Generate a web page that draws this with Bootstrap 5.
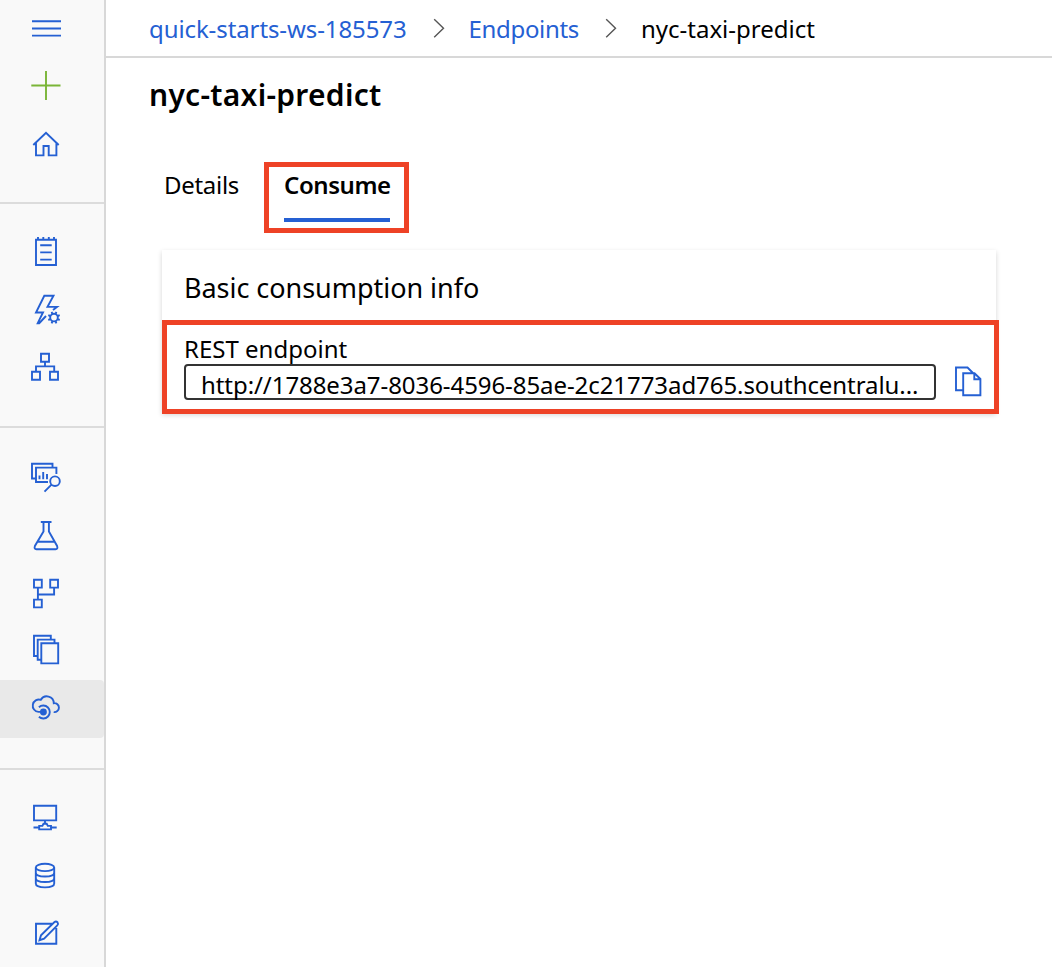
<!DOCTYPE html>
<html lang="en">
<head>
<meta charset="utf-8">
<meta name="viewport" content="width=device-width, initial-scale=1">
<title>nyc-taxi-predict</title>
<link href="https://cdn.jsdelivr.net/npm/bootstrap@5.3.0/dist/css/bootstrap.min.css" rel="stylesheet">
<style>
  body { font-family: "Noto Sans", "Open Sans", sans-serif; font-size: 24px; color: #000; background: #fff; --blue: #2560d3; overflow: hidden; }
  a { color: var(--blue); }
  .side { width: 106px; background: #f9f9f9; border-right: 2px solid #d8d8d8; }
  .side-group { padding: 20px 0 28px; border-bottom: 2px solid #dcdcdc; }
  .side-group.first { padding-top: 0; }
  .side-group.assets { padding-bottom: 30px; }
  .side-group.manage { border-bottom: 0; padding-bottom: 0; }
  .side-item { height: 58px; padding-left: 28px; }
  .side-item.current { background: #e9e9e9; border-radius: 0 4px 4px 0; }
  .glyph { fill: none; stroke: var(--blue); stroke-width: 1.9; flex: none; }
  .glyph .plus { stroke: #7ab537; }
  .topbar { height: 58px; border-bottom: 2px solid #d8d8d8; padding-left: 43px; }
  .topbar .t { padding-top: 2px; }
  .crumb-ws { letter-spacing: -.1px; }
  .crumb-section { letter-spacing: -.33px; margin-left: 24px; }
  .crumb-page { margin-left: 24px; }
  .chev { fill: none; stroke: #555; stroke-width: 1.4; flex: none; margin-left: 26px; }
  .title { font-size: 30px; font-weight: 600; line-height: 40px; letter-spacing: .27px; margin: 17px 0 0 43px; }
  .tabs { margin: 47px 0 0 58px; line-height: 34px; }
  .tab-plain { padding-top: 6px; width: 75px; letter-spacing: -.3px; }
  .tab-active { width: 145px; height: 71px; border: 5px solid #ee4226; margin-left: 25px; padding: 1px 14px 0 15px; }
  .tab-active span { height: 54px; border-bottom: 4px solid var(--blue); font-weight: 600; letter-spacing: -.43px; }
  .panel { width: 834px; height: 163px; margin: 17px 0 0 56px; box-shadow: 0 2px 5px rgba(0,0,0,.17); }
  .panel-title { height: 70px; padding: 18px 22px 0; font-size: 27px; line-height: 40px; letter-spacing: -.04px; }
  .endpoint { width: 836.5px; height: 94px; border: 5px solid #ee4226; padding: 7px 10px 0 17px; }
  .endpoint label { line-height: 34px; height: 32px; }
  .url { width: 752px; height: 36px; border: 2px solid #333; border-radius: 4px; padding: 0 14px 0 15px; line-height: 38px; letter-spacing: -.07px; }
  .copy { margin-left: 18px; }
  .t { white-space: nowrap; display: block; }
</style>
</head>
<body>
<div class="d-flex vh-100">
  <nav class="side flex-shrink-0">
    <div class="side-group first">
      <div class="side-item d-flex align-items-center"><svg class="glyph" width="36" height="36" viewBox="28 11 36 36"><path d="M32 21.3H61M32 28.5H61M32 35.6H61"/></svg></div>
      <div class="side-item d-flex align-items-center"><svg class="glyph" width="36" height="36" viewBox="28 69 36 36"><path class="plus" d="M31.3 85.5H60.5M46 71V100"/></svg></div>
      <div class="side-item d-flex align-items-center"><svg class="glyph" width="36" height="36" viewBox="28 127 36 36"><path d="M33.3 145L46 132.7 58.7 145M36 143V155.4H43.5V146H48.7V155.4H56.4V143"/></svg></div>
    </div>
    <div class="side-group">
      <div class="side-item d-flex align-items-center"><svg class="glyph" width="36" height="36" viewBox="28 235 36 36"><path d="M36 239.7H56V265H36ZM38 237V240M43.3 237V240M48.8 237V240M54 237V240M40.2 245.3H51.7M40.2 252.4H51.7M40.2 259.6H51.7"/></svg></div>
      <div class="side-item d-flex align-items-center"><svg class="glyph" width="36" height="36" viewBox="28 293 36 36"><path d="M53 310L57 306.9H47.5L53.5 295.8H44.3L36 312.5H43L37.7 323.2H39.2L46 316"/><circle cx="54" cy="317.6" r="3.8"/><path d="M57.8 319.2L59.7 320M55.6 321.4L56.4 323.3M52.4 321.4L51.6 323.3M50.2 319.2L48.3 320M50.2 316L48.3 315.2M52.4 313.8L51.6 311.9M55.6 313.8L56.4 311.9M57.8 316L59.7 315.2"/></svg></div>
      <div class="side-item d-flex align-items-center"><svg class="glyph" width="36" height="36" viewBox="28 351 36 36"><path d="M41 353.8H49V361.8H41ZM32 371.7H40V379.7H32ZM50 371.7H58V379.7H50ZM45 362V366.4M36 371.5V366.4H54.2V371.5"/></svg></div>
    </div>
    <div class="side-group assets">
      <div class="side-item d-flex align-items-center"><svg class="glyph" width="36" height="36" viewBox="28 459 36 36"><path d="M52.5 467V463.8H32V478.5H35.5M48 482H36V467.6H56.4V474M39.5 475.5V479.3M43.2 472V479.3M47 474V479.3M51.5 484.6L44.5 491.6"/><circle cx="55" cy="481.2" r="4.8"/></svg></div>
      <div class="side-item d-flex align-items-center"><svg class="glyph" width="36" height="36" viewBox="28 517 36 36"><path d="M40.8 522H51.5M43.5 522V531.5L34.9 546Q33.8 549 36.5 549.2H55.5Q58.2 549 57.1 546L48.9 531.5V522M37.5 541.7H54.5"/></svg></div>
      <div class="side-item d-flex align-items-center"><svg class="glyph" width="36" height="36" viewBox="28 575 36 36"><path d="M34 579.8H41.8V587.6H34ZM50.2 579.8H58V587.6H50.2ZM34 599.6H41.8V607.4H34ZM37.9 587.6V599.6M37.9 594.5H54.1V587.6"/></svg></div>
      <div class="side-item d-flex align-items-center"><svg class="glyph" width="36" height="36" viewBox="28 633 36 36"><path d="M50.8 639V635.8H34V656H37.5M54.5 643V639.6H37.7V659.7H41M41.3 643.2H58.2V663.4H41.3Z"/></svg></div>
      <div class="side-item current d-flex align-items-center"><svg class="glyph" width="36" height="36" viewBox="28 691 36 36"><path d="M43 711.9H38.5A6.2 6.2 0 1 1 40.8 699.8A7 7 0 0 1 53.8 703.2A4.5 4.5 0 1 1 53.7 712.1M38.9 707.2A6.5 6.5 0 1 1 38.9 716.8"/><circle cx="43.4" cy="712" r="2.5" fill="#2560d3"/></svg></div>
    </div>
    <div class="side-group manage">
      <div class="side-item d-flex align-items-center"><svg class="glyph" width="36" height="36" viewBox="28 801 36 36"><path d="M34 805.8H56.2V820.4H34ZM45 820.4V824M33.5 827.5H39.2M51 827.5H56.7M39.2 829.4V825.9H42.4L43.5 823.8H46.7L47.8 825.9H51V829.4Z"/></svg></div>
      <div class="side-item d-flex align-items-center"><svg class="glyph" width="36" height="36" viewBox="28 859 36 36"><ellipse cx="45" cy="867.4" rx="9.2" ry="3.7"/><path d="M35.8 867.4V883.6C35.8 888.6 54.2 888.6 54.2 883.6V867.4M35.8 872.7C35.8 877.7 54.2 877.7 54.2 872.7M35.8 878.2C35.8 883.2 54.2 883.2 54.2 878.2"/></svg></div>
      <div class="side-item d-flex align-items-center"><svg class="glyph" width="36" height="36" viewBox="28 917 36 36"><path d="M52 923.7H36V943.8H56.3V928M39.5 940.2L41 935.2 54.2 922.2Q56 920.9 57.5 922.2 58.7 923.8 57.3 925.3L44.1 938.6Z"/></svg></div>
    </div>
  </nav>
  <main class="flex-grow-1">
    <div class="topbar d-flex align-items-center">
      <a href="#" class="t crumb-ws text-decoration-none">quick-starts-ws-185573</a>
      <svg class="chev" width="12" height="22" viewBox="0 0 12 22"><path d="M1.2 2L10.5 11 1.2 20" transform="translate(0 .3)"/></svg>
      <a href="#" class="t crumb-section text-decoration-none">Endpoints</a>
      <svg class="chev" width="12" height="22" viewBox="0 0 12 22"><path d="M1.2 2L10.5 11 1.2 20" transform="translate(0 .3)"/></svg>
      <span class="t crumb-page">nyc-taxi-predict</span>
    </div>
    <h1 class="title"><span class="t">nyc-taxi-predict</span></h1>
    <div class="tabs d-flex">
      <div class="tab-plain"><span class="t">Details</span></div>
      <div class="tab-active"><span class="t">Consume</span></div>
    </div>
    <section class="panel">
      <div class="panel-title"><span class="t">Basic consumption info</span></div>
      <div class="endpoint">
        <label class="t">REST endpoint</label>
        <div class="d-flex align-items-center">
          <div class="url"><span class="t">http://1788e3a7-8036-4596-85ae-2c21773ad765.southcentralu...</span></div>
          <svg class="glyph copy" width="30" height="32" viewBox="954 366 30 32"><path d="M963 390.2H956V367.5H967.5L973 373M963.2 373.2H974.5L980.4 379V395.2H963.2ZM974.3 373.2V379.2H980.4"/></svg>
        </div>
      </div>
    </section>
  </main>
</div>
<script src="https://cdn.jsdelivr.net/npm/bootstrap@5.3.0/dist/js/bootstrap.bundle.min.js"></script>
</body>
</html>
